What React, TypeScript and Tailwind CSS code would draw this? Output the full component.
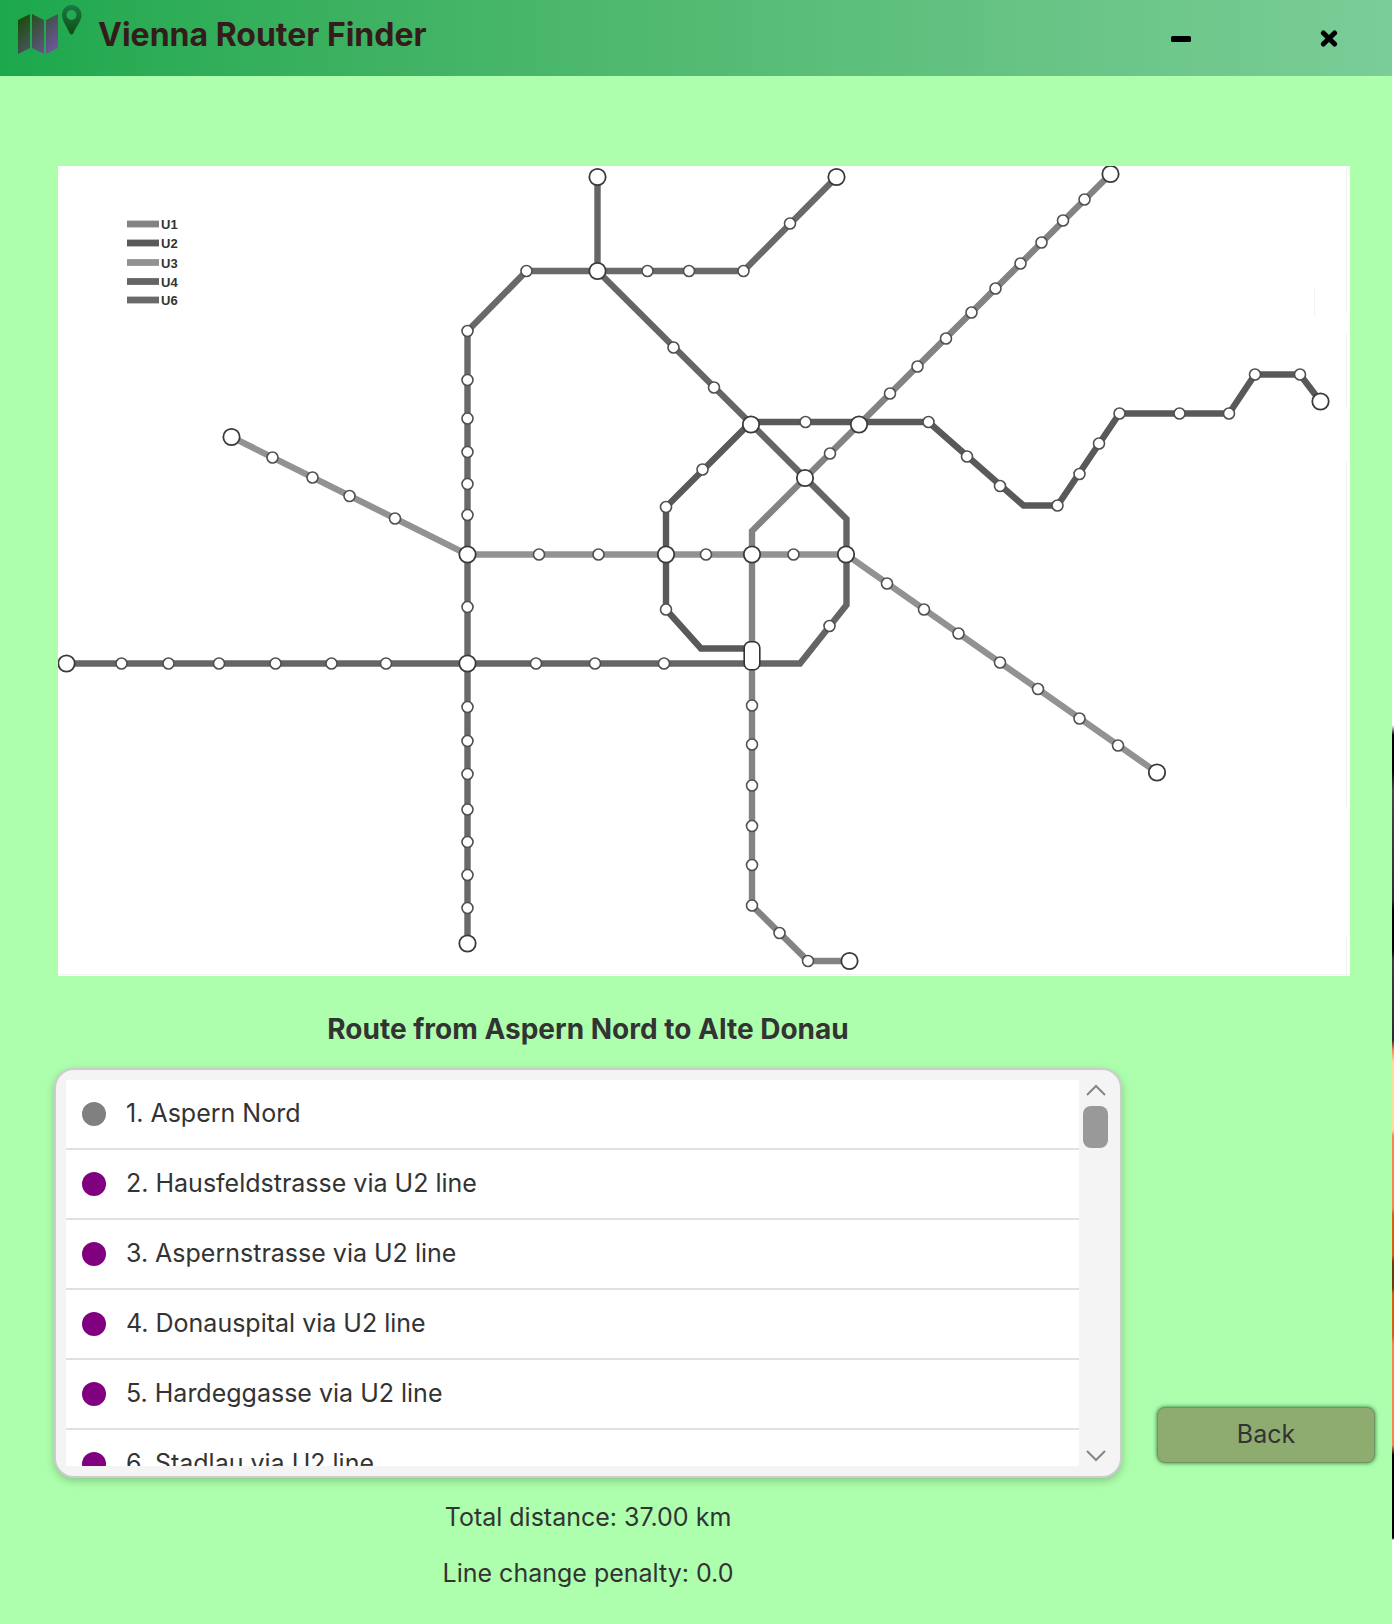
import React from "react";

type Point = [number, number];

const LINES: { id: string; color: string; points: Point[] }[] = [
  {
    id: "U3",
    color: "#929292",
    points: [[231.5, 437], [467.5, 554.5], [846, 554.5], [1157, 772.5]],
  },
  {
    id: "U1",
    color: "#838383",
    points: [[1110.5, 174], [859, 424.5], [752, 531], [752, 905.5], [808, 961], [849.5, 961]],
  },
  {
    id: "U6",
    color: "#696969",
    points: [[836.5, 177], [743.5, 271], [526.5, 271], [467.5, 331], [467.5, 943.5]],
  },
  {
    id: "U4",
    color: "#656565",
    points: [[597.5, 177], [597.5, 271], [846.5, 519], [846.5, 605], [800, 663.5], [66.5, 663.5]],
  },
  {
    id: "U2",
    color: "#595959",
    points: [
      [752, 648.5], [701, 648.5], [666, 609.5], [666, 507], [751, 422], [928.5, 422], [1023.5, 505.5],
      [1057.5, 505.5], [1119.5, 413.5], [1229, 413.5], [1255, 374.5], [1300, 374.5], [1320.5, 401.5],
    ],
  },
];

const STATIONS: Point[] = [
  // U6
  [467.5, 331], [467.5, 380], [467.5, 418.5], [467.5, 452], [467.5, 484], [467.5, 515], [467.5, 607],
  [467.5, 707], [467.5, 741], [467.5, 774], [467.5, 809.5], [467.5, 842], [467.5, 875], [467.5, 908],
  [526.5, 271], [647.5, 271], [689, 271], [743.5, 271], [790, 223.5],
  // U4
  [673.5, 347.5], [714, 387.5], [829.5, 626], [664, 663.5], [595, 663.5], [536, 663.5], [386, 663.5],
  [331.5, 663.5], [275.5, 663.5], [219, 663.5], [168.5, 663.5], [121.5, 663.5],
  // U2
  [666, 609.5], [666, 507], [702.5, 469.5], [805.5, 422], [928.5, 422], [967, 456.5], [1000, 486],
  [1057.5, 505.5], [1079.5, 474], [1099, 443.5], [1119.5, 413.5], [1179.5, 413.5], [1229, 413.5],
  [1255, 374.5], [1300, 374.5],
  // U1
  [1084.5, 199.5], [1063, 220.5], [1041.5, 242.5], [1020.5, 263.5], [995.5, 288.5], [971.5, 312.5],
  [946, 338.5], [917.5, 366.5], [890, 393.5], [830, 453.5], [752, 705.5], [752, 744.5], [752, 785.5],
  [752, 826], [752, 865], [752, 905.5], [779.5, 933], [808, 961],
  // U3
  [272.5, 457.5], [312.5, 477.5], [349.5, 496], [395, 518.5], [539, 554.5], [598.5, 554.5],
  [706, 554.5], [793.5, 554.5], [887, 583.5], [924, 609.5], [958.5, 633.5], [1000, 662.5],
  [1038, 689], [1079.5, 718.5], [1118, 745.5],
];

const HUBS: Point[] = [
  [597.5, 177], [836.5, 177], [597.5, 271], [1110.5, 174], [751, 424.5], [859, 424.5], [805, 478],
  [1320.5, 401.5], [231.5, 437], [467.5, 554.5], [666, 554.5], [752, 554.5], [846, 554.5],
  [467.5, 663.5], [66.5, 663.5], [467.5, 943.5], [849.5, 961], [1157, 772.5],
];

const LEGEND = [
  { id: "U1", color: "#838383", y: 224 },
  { id: "U2", color: "#595959", y: 243 },
  { id: "U3", color: "#929292", y: 262.5 },
  { id: "U4", color: "#656565", y: 281.5 },
  { id: "U6", color: "#696969", y: 300 },
];

const STOPS = [
  { label: "1. Aspern Nord", line: null },
  { label: "2. Hausfeldstrasse via U2 line", line: "U2" },
  { label: "3. Aspernstrasse via U2 line", line: "U2" },
  { label: "4. Donauspital via U2 line", line: "U2" },
  { label: "5. Hardeggasse via U2 line", line: "U2" },
  { label: "6. Stadlau via U2 line", line: "U2" },
];

function MetroMap() {
  return (
    <svg viewBox="58 166 1292 810" className="block w-full bg-white" role="img" aria-label="Vienna metro map">
      {LEGEND.map((l) => (
        <g key={l.id}>
          <rect x={127} y={l.y - 3.4} width={32} height={6.8} fill={l.color} />
          <text x={161} y={l.y + 5} fontSize={13} fontWeight={700} fill="#333" fontFamily="Liberation Sans, Arial, sans-serif">
            {l.id}
          </text>
        </g>
      ))}
      {LINES.map((l) => (
        <polyline
          key={l.id}
          points={l.points.map((p) => p.join(",")).join(" ")}
          fill="none"
          stroke={l.color}
          strokeWidth={6.4}
          strokeLinejoin="miter"
        />
      ))}
      {STATIONS.map(([x, y]) => (
        <circle key={`${x}-${y}`} cx={x} cy={y} r={5.5} fill="#fff" stroke="#505050" strokeWidth={1.6} />
      ))}
      {HUBS.map(([x, y]) => (
        <circle key={`${x}-${y}`} cx={x} cy={y} r={8.2} fill="#fff" stroke="#3a3a3a" strokeWidth={1.8} />
      ))}
      <rect x={744.2} y={641.7} width={15.6} height={28} rx={6} fill="#fff" stroke="#333" strokeWidth={1.6} />
      <path d="M1346.5 166V313M1346.5 332V406M1346.5 460V806M1346.5 938V976M1314.5 287V316M58 974.5H1350" stroke="#f3f3f3" strokeWidth={1} />
    </svg>
  );
}

function Logo() {
  return (
    <svg viewBox="0 0 66 52" className="h-[52px] w-[66px]" aria-hidden="true">
      <defs>
        <linearGradient id="sheet" gradientUnits="userSpaceOnUse" x1="0" y1="12" x2="40" y2="46">
          <stop offset="0" stopColor="#154d00" />
          <stop offset="1" stopColor="#7656a6" />
        </linearGradient>
        <linearGradient id="pin" x1="0" y1="0" x2="0" y2="1">
          <stop offset="0" stopColor="#197a45" />
          <stop offset="1" stopColor="#124a12" />
        </linearGradient>
      </defs>
      <path d="M0 15L12 9V43L0 49ZM14 9L26 15V49L14 43ZM28 15L40 9V43L28 49Z" fill="url(#sheet)" />
      <path
        fillRule="evenodd"
        d="M53.500 0C59 0 63.500 4.500 63.500 10C63.500 16 57.500 22.500 55.500 28Q53.500 31 51.500 28C49.500 22.500 44 16 44 10C44 4.500 48 0 53.500 0ZM53.500 5A5 5 0 1 0 53.500 15A5 5 0 1 0 53.500 5Z"
        fill="url(#pin)"
      />
    </svg>
  );
}

function Chevron({ down = false }: { down?: boolean }) {
  return (
    <svg viewBox="0 0 20 12" className="h-3 w-5" aria-hidden="true">
      <path d={down ? "M1 1L10 10L19 1" : "M1 11L10 2L19 11"} fill="none" stroke="#858585" strokeWidth={2} />
    </svg>
  );
}

export default function App() {
  return (
    <div className="flex min-h-screen font-['Inter',sans-serif] text-[#333]">
      <div className="flex min-w-0 flex-1 flex-col bg-[#adffad]">
        <header className="flex h-[76px] items-start bg-linear-to-r from-[#1ba84d] to-[#7acd97] pl-[18px]">
          <div className="pt-[5px]">
            <Logo />
          </div>
          <h1 className="flex-1 pt-[15px] pl-3.5 text-[32px] leading-10 font-bold text-[#351c1c]">
            Vienna Router Finder
          </h1>
          <div className="flex h-full items-center gap-[108px] pr-[43px]">
            <button type="button" aria-label="Minimize" className="flex size-10 items-center justify-center">
              <svg viewBox="0 0 22 22" className="size-[22px]">
                <rect x="1" y="9" width="20" height="6" rx="1.5" fill="#000" />
              </svg>
            </button>
            <button type="button" aria-label="Close" className="flex size-10 items-center justify-center">
              <svg viewBox="0 0 18 18" className="size-[18px]">
                <path d="M3.400 3.900L14.600 15.100M14.600 3.900L3.400 15.100" stroke="#000" strokeWidth="5" strokeLinecap="round" />
              </svg>
            </button>
          </div>
        </header>

        <main className="pt-[90px] pb-6">
          <div className="pr-[42px] pl-[58px]">
            <MetroMap />
          </div>

          <div className="mt-7 flex pr-[17px] pl-[54px]">
            <section className="flex min-w-0 flex-1 flex-col">
              <h2 className="text-center text-[28px] leading-[50px] font-bold">Route from Aspern Nord to Alte Donau</h2>
              <div className="mt-3.5 flex h-[410px] rounded-[20px] border-2 border-[#ccc] bg-[#f4f4f4] py-2.5 pl-2.5 shadow-[0_3px_8px_rgba(0,0,0,0.22)]">
                <ul className="min-w-0 flex-1 overflow-hidden bg-white">
                  {STOPS.map((s) => (
                    <li key={s.label} className="flex h-[70px] items-center gap-5 border-b-2 border-[#e0e0e0] pl-4 text-[25px]">
                      <span className={s.line ? "size-6 rounded-full bg-[#800080]" : "size-6 rounded-full bg-[#808080]"} />
                      {s.label}
                    </li>
                  ))}
                </ul>
                <div className="flex w-[41px] flex-col items-center py-1 pr-2">
                  <button type="button" aria-label="Scroll up">
                    <Chevron />
                  </button>
                  <div className="mt-2.5 w-[25px] flex-1">
                    <div className="h-[42px] rounded-lg bg-[#999]" />
                  </div>
                  <button type="button" aria-label="Scroll down">
                    <Chevron down />
                  </button>
                </div>
              </div>
              <div className="mt-[11px] text-center text-[25px] leading-[56px]">
                <p>Total distance: 37.00 km</p>
                <p>Line change penalty: 0.0</p>
              </div>
            </section>
            <div className="ml-[35px] flex w-[218px] items-start pt-[403px]">
              <button
                type="button"
                className="h-14 w-full rounded-lg border border-[#6f9560] bg-[#8eac70] text-[25px] shadow-[0_0_4px_rgba(0,60,20,0.7)]"
              >
                Back
              </button>
            </div>
          </div>
        </main>
      </div>
      <div
        className="w-0.5 bg-[linear-gradient(to_bottom,#fff_725px,#000_735px,#000_770px,#46424a_790px,#2c2a32_900px,#000_910px,#000_950px,#3c3840_960px,#2c2a32_1040px,#f28850_1050px,#ffd9a0_1062px,#ffd9a0_1130px,#f28850_1136px,#f28850_1208px,#d85e18_1214px,#d85e18_1255px,#6e3808_1262px,#6e3808_1288px,#d85e18_1294px,#d85e18_1336px,#f28850_1344px,#f28850_1445px,#000_1455px,#000_1538px,#fff_1540px)]"
        aria-hidden="true"
      />
    </div>
  );
}
